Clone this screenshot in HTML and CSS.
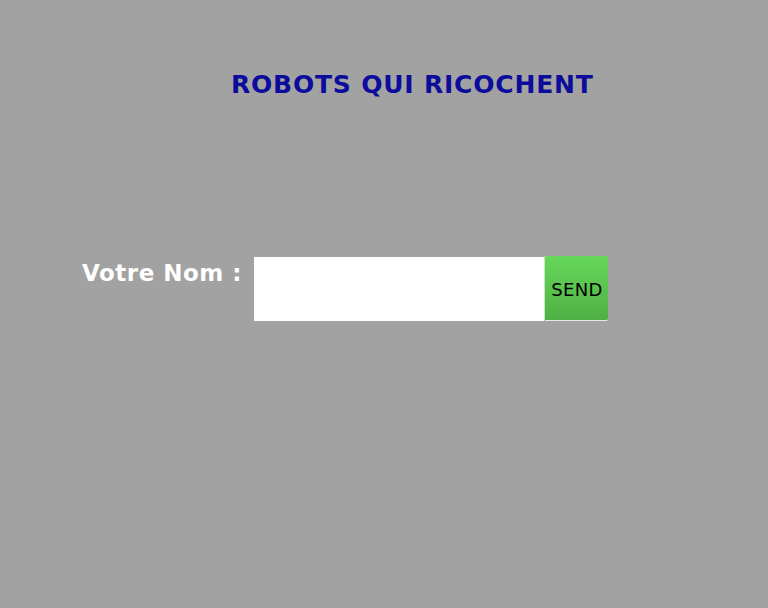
FILE: index.html
```html
<!DOCTYPE html>
<html>
<head>
<meta charset="utf-8">
<link rel="stylesheet" href="styles.css">
</head>
<body>
<div class="page">
  <h1 class="title">ROBOTS QUI RICOCHENT</h1>
  <form class="login" onsubmit="return false;">
    <label class="label" for="nom">Votre Nom :</label>
    <input class="name-input" id="nom" type="text">
    <button class="send" type="submit">SEND</button>
  </form>
</div>
</body>
</html>
```

FILE: styles.css
```css
html, body {
  margin: 0;
  padding: 0;
  background: #a2a2a2;
  height: 100%;
}
.page {
  font-family: "DejaVu Sans", sans-serif;
  padding-top: 70px;
}
.title {
  margin: 0 0 0 231px;
  font-size: 25px;
  font-weight: bold;
  color: #0c0c9c;
  line-height: 30px;
  letter-spacing: 0.8px;
}
.login {
  display: flex;
  align-items: flex-start;
  margin: 156px 0 0 82px;
}
.label {
  color: #ffffff;
  font-weight: bold;
  font-size: 23px;
  line-height: 34px;
  letter-spacing: 0.5px;
  width: 172px;
}
.name-input {
  box-sizing: border-box;
  width: 290px;
  height: 64px;
  margin: 1px 0 0 0;
  border: none;
  padding: 0 8px;
  background: #ffffff;
  font-family: "DejaVu Sans", sans-serif;
  font-size: 16px;
  outline: none;
}
.send {
  box-sizing: border-box;
  width: 64px;
  height: 65px;
  border: none;
  border-left: 1px solid #c8e8c0;
  border-bottom: 1px solid #e4ece2;
  border-radius: 2px;
  background: linear-gradient(#66d85a, #4fb044);
  font-family: "DejaVu Sans", sans-serif;
  font-size: 18px;
  color: #000;
  padding: 3px 0 0 1px;
  letter-spacing: 0.4px;
}
```
